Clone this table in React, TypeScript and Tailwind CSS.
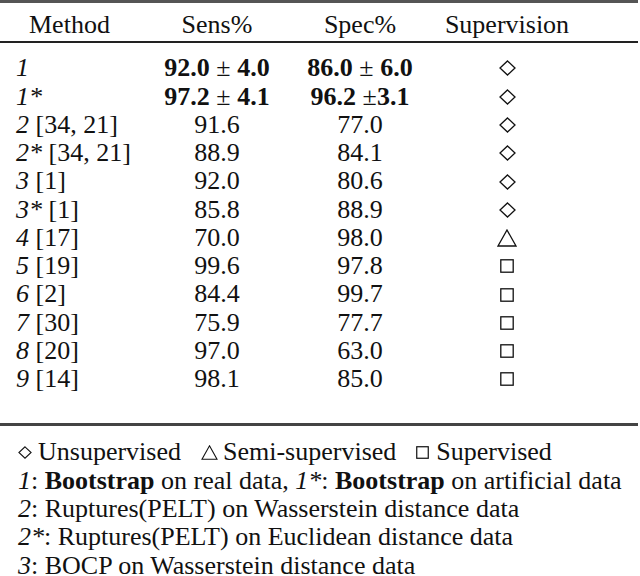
import React from "react";

const Diamond = ({ w = 17, h = 16 }: { w?: number; h?: number }) => (
  <svg width={w} height={h} viewBox="0 0 17 16" className="inline-block">
    <path d="M8.5 1 L16 8 L8.5 15 L1 8 Z" fill="none" stroke="#111" strokeWidth="1.3" />
  </svg>
);
const Triangle = ({ w = 20, h = 18 }: { w?: number; h?: number }) => (
  <svg width={w} height={h} viewBox="0 0 20 18" className="inline-block">
    <path d="M10 1 L19 17 L1 17 Z" fill="none" stroke="#111" strokeWidth="1.3" />
  </svg>
);
const Square = ({ w = 14, h = 14 }: { w?: number; h?: number }) => (
  <svg width={w} height={h} viewBox="0 0 14 14" className="inline-block">
    <rect x="0.8" y="0.8" width="12.4" height="12.4" fill="none" stroke="#111" strokeWidth="1.3" />
  </svg>
);

type Row = { label: React.ReactNode; sens: React.ReactNode; spec: React.ReactNode; sup: "d" | "t" | "s" };

const rows: Row[] = [
  {
    label: <i>1</i>,
    sens: (
      <b>
        92.0 <span className="font-normal">±</span> 4.0
      </b>
    ),
    spec: (
      <b>
        86.0 <span className="font-normal">±</span> 6.0
      </b>
    ),
    sup: "d",
  },
  {
    label: <i>1*</i>,
    sens: (
      <b>
        97.2 <span className="font-normal">±</span> 4.1
      </b>
    ),
    spec: (
      <b>
        96.2 <span className="font-normal">±</span>3.1
      </b>
    ),
    sup: "d",
  },
  { label: <><i>2</i> [34, 21]</>, sens: "91.6", spec: "77.0", sup: "d" },
  { label: <><i>2*</i> [34, 21]</>, sens: "88.9", spec: "84.1", sup: "d" },
  { label: <><i>3</i> [1]</>, sens: "92.0", spec: "80.6", sup: "d" },
  { label: <><i>3*</i> [1]</>, sens: "85.8", spec: "88.9", sup: "d" },
  { label: <><i>4</i> [17]</>, sens: "70.0", spec: "98.0", sup: "t" },
  { label: <><i>5</i> [19]</>, sens: "99.6", spec: "97.8", sup: "s" },
  { label: <><i>6</i> [2]</>, sens: "84.4", spec: "99.7", sup: "s" },
  { label: <><i>7</i> [30]</>, sens: "75.9", spec: "77.7", sup: "s" },
  { label: <><i>8</i> [20]</>, sens: "97.0", spec: "63.0", sup: "s" },
  { label: <><i>9</i> [14]</>, sens: "98.1", spec: "85.0", sup: "s" },
];

const Sym = ({ k }: { k: "d" | "t" | "s" }) =>
  k === "d" ? <Diamond /> : k === "t" ? <Triangle /> : <Square />;

export default function App() {
  return (
    <div className="w-[640px] h-[576px] bg-white text-[#111] overflow-hidden">
      <div className="font-['Liberation_Serif'] text-[26px] leading-[28.3px]">
        <div className="h-[3px] bg-[#555] mr-[2px]" />
        <div className="grid grid-cols-[145px_144px_142px_152px_1fr] pt-[8px] items-center">
          <div className="pl-[29px]">Method</div>
          <div className="text-center">Sens%</div>
          <div className="text-center">Spec%</div>
          <div className="text-center">Supervision</div>
          <div />
        </div>
        <div className="h-[2px] bg-[#222] mt-[2px] mr-[2px]" />
        <div className="pt-[11px]">
          {rows.map((r, i) => (
            <div key={i} className="grid grid-cols-[145px_144px_142px_152px_1fr] items-center h-[28.27px]">
              <div className="pl-[16px] whitespace-nowrap">{r.label}</div>
              <div className="text-center whitespace-nowrap">{r.sens}</div>
              <div className="text-center whitespace-nowrap">{r.spec}</div>
              <div className="flex justify-center">
                <Sym k={r.sup} />
              </div>
              <div />
            </div>
          ))}
        </div>
        <div className="h-[3px] bg-[#444] mt-[30px] mr-[2px]" />
        <div className="pt-[12px] pl-[18px] whitespace-nowrap">
          <div className="flex items-center h-[28.27px]">
            <Diamond w={14} h={13} />
            <span className="ml-[6px]">Unsupervised</span>
            <span className="ml-[20px] inline-flex items-center">
              <Triangle w={17} h={15} />
            </span>
            <span className="ml-[5px]">Semi-supervised</span>
            <span className="ml-[20px] inline-flex items-center">
              <Square w={13} h={13} />
            </span>
            <span className="ml-[7px]">Supervised</span>
          </div>
          <div className="h-[28.27px]">
            <i>1</i>: <b>Bootstrap</b> on real data, <i>1*</i>: <b>Bootstrap</b> on artificial data
          </div>
          <div className="h-[28.27px]">
            <i>2</i>: Ruptures(PELT) on Wasserstein distance data
          </div>
          <div className="h-[28.27px]">
            <i>2*</i>: Ruptures(PELT) on Euclidean distance data
          </div>
          <div className="h-[24px]">
            <i>3</i>: BOCP on Wasserstein distance data
          </div>
        </div>
      </div>
    </div>
  );
}
